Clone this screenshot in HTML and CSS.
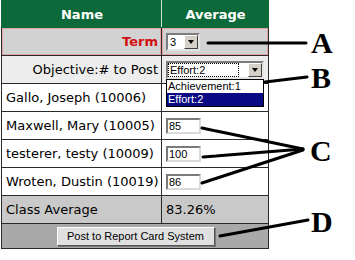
FILE: index.html
```html
<!DOCTYPE html>
<html lang="en">
<head>
    <meta charset="UTF-8">
    <meta name="viewport" content="width=device-width, initial-scale=1.0">
    <title>Post Grades</title>
    <link rel="stylesheet" href="styles.css">
</head>
<body>

    <table class="grades">
        <colgroup>
            <col class="col-name">
            <col class="col-avg">
        </colgroup>
        <thead>
            <tr>
                <th class="th-name">Name</th>
                <th>Average</th>
            </tr>
        </thead>
        <tbody>
            <tr class="term-row">
                <td class="label term-label">Term</td>
                <td>
                    <span class="select select-term">
                        <span class="select-value">3</span>
                        <span class="select-btn"></span>
                    </span>
                </td>
            </tr>
            <tr class="objective-row">
                <td class="label">Objective:# to Post</td>
                <td>
                    <span class="select-wrap">
                        <span class="select select-objective">
                            <span class="select-value focused">Effort:2</span>
                            <span class="select-btn"></span>
                        </span>
                        <ul class="dropdown">
                            <li>Achievement:1</li>
                            <li class="selected">Effort:2</li>
                        </ul>
                    </span>
                </td>
            </tr>
            <tr>
                <td>Gallo, Joseph (10006)</td>
                <td></td>
            </tr>
            <tr>
                <td>Maxwell, Mary (10005)</td>
                <td><input class="score" type="text" value="85"></td>
            </tr>
            <tr>
                <td>testerer, testy (10009)</td>
                <td><input class="score" type="text" value="100"></td>
            </tr>
            <tr>
                <td>Wroten, Dustin (10019)</td>
                <td><input class="score" type="text" value="86"></td>
            </tr>
            <tr class="average-row">
                <td>Class Average</td>
                <td>83.26%</td>
            </tr>
            <tr class="post-row">
                <td colspan="2"><button class="btn-post">Post to Report Card System</button></td>
            </tr>
        </tbody>
    </table>

    <!-- callout lines and letters drawn over the screenshot -->
    <svg class="callouts" width="355" height="260" viewBox="0 0 355 260">
        <g stroke="#000" stroke-width="3" stroke-linecap="round">
            <line x1="208" y1="43" x2="306" y2="43"/>
            <line x1="265" y1="82" x2="307" y2="77"/>
            <line x1="202" y1="128" x2="303" y2="149"/>
            <line x1="203" y1="157" x2="303" y2="149"/>
            <line x1="202" y1="183" x2="303" y2="150"/>
            <line x1="220" y1="236" x2="308" y2="220"/>
        </g>
        <g class="callout-letters">
            <text x="311" y="53">A</text>
            <text x="311" y="88">B</text>
            <text x="310" y="161">C</text>
            <text x="311" y="232">D</text>
        </g>
    </svg>

</body>
</html>
```

FILE: styles.css
```css
body {
    margin: 0;
    padding: 0 0 0 1px;
    background: #fff;
    font-family: "DejaVu Sans", Verdana, sans-serif;
    font-size: 13px;
    color: #000;
    position: relative;
}
.grades {
    border-collapse: collapse;
    table-layout: fixed;
    width: 268px;
    border: 1px solid #222;
}
.col-name {
    width: 160px;
}
.grades th, .grades td {
    border: 1px solid #2a2a2a;
    height: 27px;
    padding: 0 3px 0 4px;
    text-align: left;
    white-space: nowrap;
}
.grades th {
    height: 26px;
    background-color: #0c6a3a;
    border-color: #0c6a3a;
    color: #fff;
    font-size: 13px;
    font-weight: bold;
    text-align: center;
}
.grades th.th-name {
    border-right-color: #cfe6d7;
}
.label {
    text-align: right !important;
}
.term-row td {
    background-color: #d2d2d2;
    box-shadow: inset 0 0 0 1px #e6a3a3;
}
.term-label {
    color: #d40f0f;
    font-weight: bold;
}
.objective-row td {
    background-color: #ededed;
}
.average-row td {
    background-color: #c9c9c9;
}
.post-row td {
    height: 24px;
    background-color: #a9a9a9;
    text-align: center;
}

/* old style form widgets */
.select {
    display: inline-flex;
    height: 18px;
    box-sizing: border-box;
    border: 2px solid;
    border-color: #7c7c7c #e4e4e4 #e4e4e4 #7c7c7c;
    background: #fff;
    font: 11px "Liberation Sans", Arial, sans-serif;
    vertical-align: middle;
}
.select-term {
    width: 34px;
}
.select-objective {
    width: 98px;
}
.select-value {
    flex: 1;
    padding-left: 2px;
    line-height: 14px;
}
.select-value.focused {
    margin: 0 9px 0 0;
    padding-left: 1px;
    line-height: 12px;
    border: 1px dotted #000;
}
.select-btn {
    width: 14px;
    box-sizing: border-box;
    background: #d4d0c8;
    border: 1px solid;
    border-color: #fff #404040 #404040 #fff;
    display: flex;
    align-items: center;
    justify-content: center;
}
.select-btn::after {
    content: "";
    border-left: 3px solid transparent;
    border-right: 3px solid transparent;
    border-top: 4px solid #000;
}
.select-wrap {
    position: relative;
    display: inline-block;
    vertical-align: middle;
}
.dropdown {
    position: absolute;
    left: 0;
    top: 100%;
    width: 98px;
    box-sizing: border-box;
    margin: 0;
    padding: 0;
    list-style: none;
    background: #fff;
    border: 1px solid #000;
    font: 11px "Liberation Sans", Arial, sans-serif;
    line-height: 13px;
    z-index: 2;
}
.dropdown li {
    padding-left: 1px;
}
.dropdown .selected {
    background-color: #0a0a84;
    color: #fff;
}
.score {
    width: 35px;
    height: 16px;
    box-sizing: border-box;
    margin: 0;
    padding: 0 1px;
    border: 2px solid;
    border-color: #7a7a7a #dadada #dadada #7a7a7a;
    font: 11px "Liberation Sans", Arial, sans-serif;
    vertical-align: middle;
}
.btn-post {
    width: 158px;
    height: 19px;
    padding: 0;
    background-color: #e0e0e0;
    border: 1px solid;
    border-color: #fff #555 #555 #fff;
    box-shadow: 1px 1px 0 #777;
    font: 11px "Liberation Sans", Arial, sans-serif;
    color: #000;
    vertical-align: middle;
}

.callouts {
    position: absolute;
    left: 0;
    top: 0;
    pointer-events: none;
}
.callout-letters {
    font-family: "Liberation Serif", "Times New Roman", serif;
    font-weight: bold;
    font-size: 30px;
    fill: #000;
}
```
